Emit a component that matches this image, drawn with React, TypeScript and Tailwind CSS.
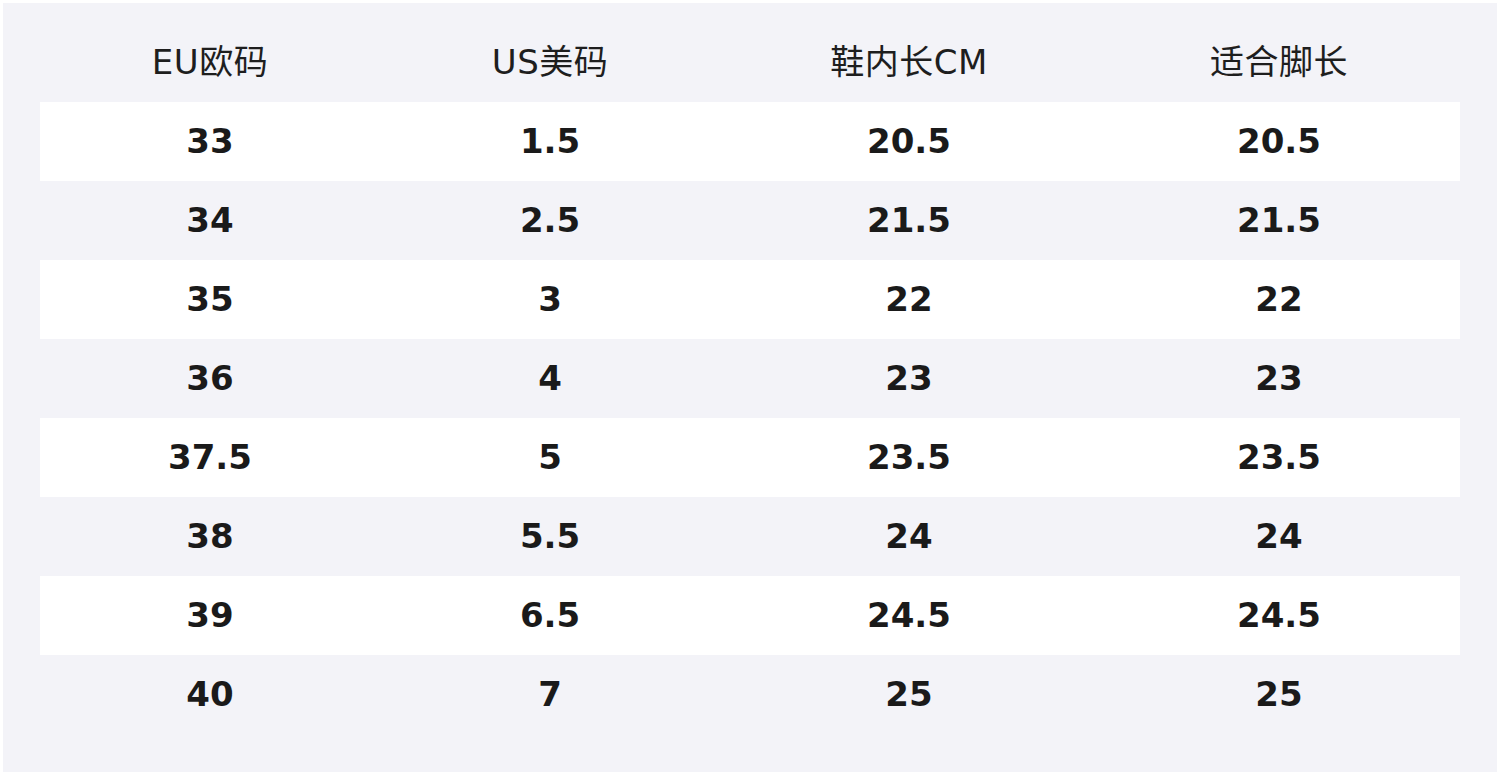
const headers = ["EU欧码", "US美码", "鞋内长CM", "适合脚长"]

const rows = [
  ["33", "1.5", "20.5", "20.5"],
  ["34", "2.5", "21.5", "21.5"],
  ["35", "3", "22", "22"],
  ["36", "4", "23", "23"],
  ["37.5", "5", "23.5", "23.5"],
  ["38", "5.5", "24", "24"],
  ["39", "6.5", "24.5", "24.5"],
  ["40", "7", "25", "25"],
]

const cols = "grid grid-cols-[340px_340px_378px_362px]"

export default function App() {
  return (
    <div
      className="w-[1500px] h-[775px] bg-white p-[3px]"
      style={{ fontFamily: '"DejaVu Sans", "Noto Sans CJK SC", sans-serif' }}
    >
      <div className="h-[769px] w-[1494px] bg-[#f3f3f8] px-[37px]">
        {/* Header */}
        <div className={`${cols} h-[99px] pt-[39px] text-[34px] leading-[40px] text-[#1e1e1e] tracking-[0.5px]`}>
          {headers.map((h) => (
            <div key={h} className="text-center">
              {h}
            </div>
          ))}
        </div>

        {/* Rows */}
        {rows.map((r, i) => (
          <div
            key={i}
            className={`${cols} h-[79px] items-center text-[34px] font-bold text-[#1a1a1a] ${
              i % 2 === 0 ? "bg-white" : ""
            }`}
          >
            {r.map((c, j) => (
              <div key={j} className="text-center">
                {c}
              </div>
            ))}
          </div>
        ))}
      </div>
    </div>
  )
}
